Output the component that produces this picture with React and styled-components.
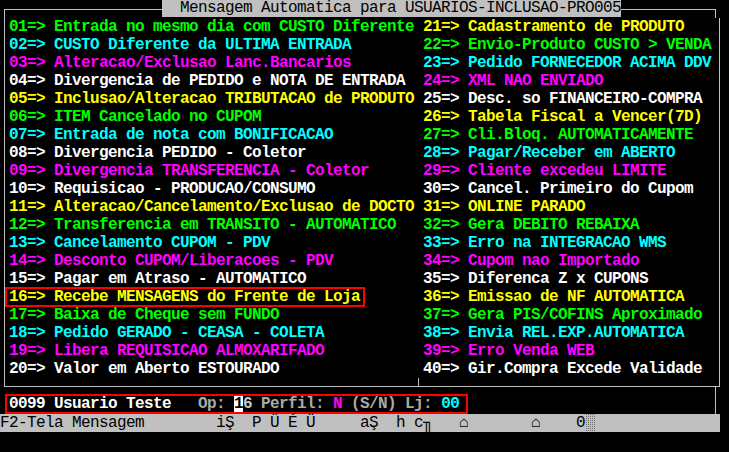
import React from 'react'
import styled, { createGlobalStyle } from 'styled-components'

const C = {
  g: '#00ff00',
  c: '#00ffff',
  m: '#ff00ff',
  w: '#ffffff',
  y: '#ffff00',
}

const line = '#c0c0c0'

const leftItems = [
  ['01', 'Entrada no mesmo dia com CUSTO Diferente', 'g'],
  ['02', 'CUSTO Diferente da ULTIMA ENTRADA', 'c'],
  ['03', 'Alteracao/Exclusao Lanc.Bancarios', 'm'],
  ['04', 'Divergencia de PEDIDO e NOTA DE ENTRADA', 'w'],
  ['05', 'Inclusao/Alteracao TRIBUTACAO de PRODUTO', 'y'],
  ['06', 'ITEM Cancelado no CUPOM', 'g'],
  ['07', 'Entrada de nota com BONIFICACAO', 'c'],
  ['08', 'Divergencia PEDIDO - Coletor', 'w'],
  ['09', 'Divergencia TRANSFERENCIA - Coletor', 'm'],
  ['10', 'Requisicao - PRODUCAO/CONSUMO', 'w'],
  ['11', 'Alteracao/Cancelamento/Exclusao de DOCTO', 'y'],
  ['12', 'Transferencia em TRANSITO - AUTOMATICO', 'g'],
  ['13', 'Cancelamento CUPOM - PDV', 'c'],
  ['14', 'Desconto CUPOM/Liberacoes - PDV', 'm'],
  ['15', 'Pagar em Atraso - AUTOMATICO', 'w'],
  ['16', 'Recebe MENSAGENS do Frente de Loja', 'y', true],
  ['17', 'Baixa de Cheque sem FUNDO', 'g'],
  ['18', 'Pedido GERADO - CEASA - COLETA', 'c'],
  ['19', 'Libera REQUISICAO ALMOXARIFADO', 'm'],
  ['20', 'Valor em Aberto ESTOURADO', 'w'],
]

const rightItems = [
  ['21', 'Cadastramento de PRODUTO', 'y'],
  ['22', 'Envio-Produto CUSTO > VENDA', 'g'],
  ['23', 'Pedido FORNECEDOR ACIMA DDV', 'c'],
  ['24', 'XML NAO ENVIADO', 'm'],
  ['25', 'Desc. so FINANCEIRO-COMPRA', 'w'],
  ['26', 'Tabela Fiscal a Vencer(7D)', 'y'],
  ['27', 'Cli.Bloq. AUTOMATICAMENTE', 'g'],
  ['28', 'Pagar/Receber em ABERTO', 'c'],
  ['29', 'Cliente excedeu LIMITE', 'm'],
  ['30', 'Cancel. Primeiro do Cupom', 'w'],
  ['31', 'ONLINE PARADO', 'y'],
  ['32', 'Gera DEBITO REBAIXA', 'g'],
  ['33', 'Erro na INTEGRACAO WMS', 'c'],
  ['34', 'Cupom nao Importado', 'm'],
  ['35', 'Diferenca Z x CUPONS', 'w'],
  ['36', 'Emissao de NF AUTOMATICA', 'y'],
  ['37', 'Gera PIS/COFINS Aproximado', 'g'],
  ['38', 'Envia REL.EXP.AUTOMATICA', 'c'],
  ['39', 'Erro Venda WEB', 'm'],
  ['40', 'Gir.Compra Excede Validade', 'w'],
]

function App() {
  const renderColumn = (items) =>
    items.map(([num, text, color, marked]) => (
      <Row key={num}>
        <Item $color={C[color]} $marked={marked}>{`${num}=> ${text}`}</Item>
      </Row>
    ))

  return (
    <>
      <GlobalStyle />
      <Screen>
        <Header>
          <HeaderLine $side="left" />
          <Title>{'  Mensagem Automatica para USUARIOS-INCLUSAO-PRO005'}</Title>
          <HeaderLine $side="right" />
        </Header>
        <Frame>
          <Columns>
            <Column>{renderColumn(leftItems)}</Column>
            <Column>{renderColumn(rightItems)}</Column>
          </Columns>
          <BottomGap>
            <Tick />
          </BottomGap>
        </Frame>
        <Lower>
          <UserBox>
            <Txt $color="#ffffff">0099 Usuario Teste</Txt>
            <Txt $color="#aaaaaa">{'   Op: '}</Txt>
            <Cursor>1</Cursor>
            <Txt $color="#c8c8c8">6</Txt>
            <Txt $color="#aaaaaa">{' Perfil: '}</Txt>
            <Txt $color={C.m}>N</Txt>
            <Txt $color="#aaaaaa">{' (S/N) Lj: '}</Txt>
            <Txt $color={C.c}>00</Txt>
          </UserBox>
        </Lower>
        <StatusBar>
          {'F2-Tela Mensagem        i\u015e  P \u00dc \u00c9 \u00dc     a\u015e  h c\u2556   \u2302       \u2302    0'}
          <Dots />
        </StatusBar>
      </Screen>
    </>
  )
}

const GlobalStyle = createGlobalStyle`
  html, body {
    margin: 0;
    padding: 0;
    background: #000;
  }
  body {
    font-family: "Liberation Mono", "DejaVu Sans Mono", monospace;
  }
`

const Screen = styled.div`
  width: 720px;
  height: 452px;
  background: #000;
  font-family: "Liberation Mono", "DejaVu Sans Mono", monospace;
  font-size: 16px;
  font-weight: bold;
  letter-spacing: -0.6px;
  white-space: pre;
`

const Header = styled.div`
  display: flex;
  width: 716px;
  height: 18px;
`

const HeaderLine = styled.div`
  align-self: flex-end;
  height: 8px;
  border-top: 1px solid ${line};
  ${(p) => p.$side === 'left'
    ? `margin-left: 4px; width: 157px; border-left: 1px solid ${line};`
    : `flex: 1; border-right: 1px solid ${line};`}
`

const Title = styled.div`
  width: 459px;
  height: 17px;
  line-height: 17px;
  background: #c0c0c0;
  color: #000;
  font-weight: normal;
  align-self: flex-start;
`

const Frame = styled.div`
  margin-left: 4px;
  width: 710px;
  padding: 0 0 0 4px;
  border-left: 1px solid ${line};
  border-right: 1px solid ${line};
  border-bottom: 1px solid ${line};
`

const Columns = styled.div`
  display: grid;
  grid-template-columns: 414px 1fr;
`

const Column = styled.div`
  display: flex;
  flex-direction: column;
`

const Row = styled.div`
  display: flex;
  align-items: center;
  height: 18px;
`

const Item = styled.span`
  color: ${(p) => p.$color};
  line-height: 18px;
  ${(p) => p.$marked && `
    margin-left: -4px;
    padding: 0 3px 0 2px;
    height: 16px;
    line-height: 16px;
    border: 2px solid #ff0000;
  `}
`

const BottomGap = styled.div`
  height: 8px;
  display: flex;
`

const Tick = styled.div`
  margin-left: 409px;
  width: 1px;
  height: 8px;
  background: ${line};
`

const Lower = styled.div`
  width: 715px;
  height: 20px;
  padding-top: 7px;
  border-right: 1px solid ${line};
`

const UserBox = styled.div`
  display: inline-flex;
  align-items: center;
  margin-left: 5px;
  height: 16px;
  line-height: 16px;
  padding: 0 7px 0 2px;
  border: 2px solid #ff0000;
`

const Txt = styled.span`
  color: ${(p) => p.$color};
`

const Cursor = styled.span`
  display: inline-block;
  width: 9px;
  height: 16px;
  background: #ffffff;
  color: #000;
`

const StatusBar = styled.div`
  display: flex;
  align-items: center;
  width: 720px;
  height: 18px;
  line-height: 18px;
  background: #c0c0c0;
  color: #000;
  font-weight: normal;
`

const Dots = styled.span`
  display: inline-block;
  width: 9px;
  height: 18px;
  margin-left: 1px;
  background-color: #c0c0c0;
  background-image:
    linear-gradient(90deg, transparent 50%, #c0c0c0 50%),
    linear-gradient(0deg, transparent 50%, #c0c0c0 50%);
  background-size: 2px 2px, 2px 2px;
  box-shadow: inset 0 0 0 9px rgba(0, 0, 0, 0);
  position: relative;
  &::before {
    content: '';
    display: block;
    width: 100%;
    height: 100%;
    background-image: radial-gradient(circle at 0.5px 0.5px, #707070 0.6px, transparent 0.7px);
    background-size: 2px 2px;
  }
`

export default App
